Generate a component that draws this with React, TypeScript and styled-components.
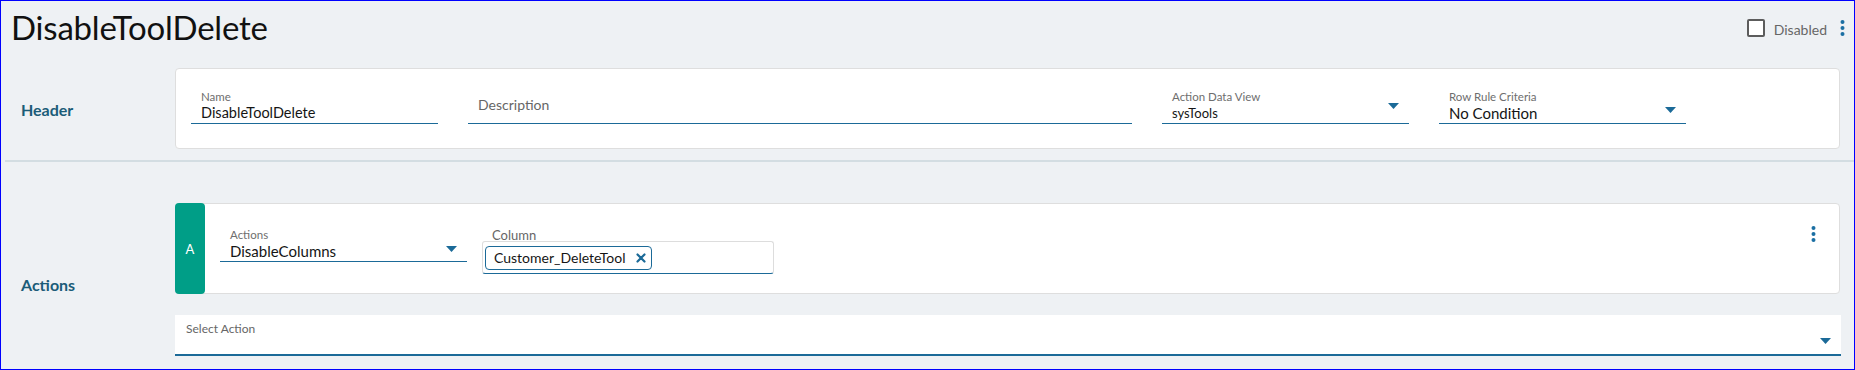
import React from 'react';
import styled, { createGlobalStyle } from 'styled-components';

const GlobalStyle = createGlobalStyle`
  html, body {
    margin: 0;
    padding: 0;
  }
  body {
    font-family: Lato, "Liberation Sans", sans-serif;
    color: #1c1c1c;
  }
`;

const Page = styled.div`
  box-sizing: border-box;
  width: 1855px;
  height: 370px;
  border: 1px solid #0000ff;
  background: #eef1f4;
  overflow: hidden;
`;

const TitleBar = styled.div`
  height: 54px;
  display: flex;
  align-items: center;
  justify-content: space-between;
  padding: 0 9px 0 10px;
`;

const Title = styled.h1`
  margin: 0 0 2px;
  font-size: 33px;
  font-weight: 400;
  color: #111;
  letter-spacing: -0.2px;
`;

const TitleTools = styled.div`
  display: flex;
  align-items: center;
  gap: 9px;
`;

const CheckBox = styled.span`
  box-sizing: border-box;
  width: 18px;
  height: 18px;
  border: 2px solid #5c5c5c;
  border-radius: 2px;
  background: #fff;
`;

const CheckLabel = styled.span`
  font-size: 14px;
  color: #666;
  margin-top: 3px;
  margin-right: 4px;
`;

const Section = styled.div<{ $top: number; $bottom: number; $divider?: boolean }>`
  display: flex;
  align-items: center;
  margin-left: 4px;
  padding: ${p => p.$top}px 14px ${p => p.$bottom}px 0;
  border-bottom: ${p => (p.$divider ? '2px solid #d3dde2' : 'none')};
`;

const SectionLabel = styled.div<{ $shift: number }>`
  width: 154px;
  flex: none;
  padding-left: 16px;
  padding-top: ${p => p.$shift}px;
  font-size: 16px;
  font-weight: 700;
  color: #1b5c78;
`;

const SectionBody = styled.div`
  flex: 1;
  display: flex;
  flex-direction: column;
  gap: 21px;
`;

const Card = styled.div`
  box-sizing: border-box;
  background: #fff;
  border: 1px solid #dedede;
  border-radius: 4px;
  display: flex;
  position: relative;
`;

const HeaderFields = styled.div`
  flex: 1;
  display: flex;
  align-items: flex-end;
  gap: 30px;
  padding: 21px 153px 24px 15px;
`;

const Field = styled.div<{ $width?: number }>`
  box-sizing: border-box;
  position: relative;
  width: ${p => (p.$width ? `${p.$width}px` : 'auto')};
  flex: ${p => (p.$width ? 'none' : '1')};
  border-bottom: 1px solid #1b6a98;
  padding: 0 30px 1px 10px;
  display: flex;
  flex-direction: column;
`;

const FieldLabel = styled.span`
  font-size: 11.5px;
  line-height: 14px;
  color: #6e6e6e;
`;

const FieldValue = styled.span<{ $size?: number }>`
  font-size: ${p => p.$size ?? 14.5}px;
  line-height: 18px;
  color: #151515;
  white-space: nowrap;
`;

const Placeholder = styled.span`
  font-size: 14px;
  line-height: 18px;
  color: #666;
  padding-bottom: 8px;
`;

const Caret = styled.svg<{ $y: number }>`
  position: absolute;
  right: 10px;
  top: ${p => p.$y}px;
`;

const Badge = styled.div`
  width: 30px;
  flex: none;
  margin: -1px 0 -1px -1px;
  background: #009e87;
  border-radius: 4px;
  color: #fff;
  font-size: 13px;
  display: flex;
  align-items: center;
  justify-content: center;
`;

const ActionFields = styled.div`
  display: flex;
  align-items: flex-start;
  gap: 15px;
  padding: 24px 0 19px 15px;
`;

const TagField = styled.div`
  display: flex;
  flex-direction: column;
  width: 292px;
`;

const TagFieldLabel = styled.span`
  font-size: 13px;
  line-height: 14px;
  color: #666;
  padding-left: 10px;
`;

const TagBox = styled.div`
  box-sizing: border-box;
  height: 33px;
  margin-top: -1px;
  border: 1px solid #dddddd;
  border-bottom-color: #1b6a98;
  border-radius: 3px;
  padding: 4px 2px;
  display: flex;
  align-items: center;
`;

const Chip = styled.span`
  box-sizing: border-box;
  height: 24px;
  border: 1px solid #1b6a98;
  border-radius: 4px;
  display: inline-flex;
  align-items: center;
  gap: 10px;
  padding: 0 5px 0 8px;
  font-size: 14px;
  color: #151515;
`;

const Kebab = styled.svg<{ $top?: number; $right?: number }>`
  display: block;
  ${p => (p.$top !== undefined ? `position: absolute; top: ${p.$top}px; right: ${p.$right}px;` : '')}
`;

const SelectBar = styled.div`
  box-sizing: border-box;
  position: relative;
  height: 41px;
  margin-right: -1px;
  background: #fff;
  border-bottom: 2px solid #1b6a98;
  padding: 6px 11px;
  font-size: 12px;
  color: #666;
`;

function DownCaret({ y }: { y: number }) {
  return (
    <Caret $y={y} width="11" height="6" viewBox="0 0 11 6">
      <path d="M0 0 L11 0 L5.5 6 Z" fill="#1b6a98" />
    </Caret>
  );
}

function Dots({ top, right }: { top?: number; right?: number }) {
  return (
    <Kebab $top={top} $right={right} width="5" height="16" viewBox="0 0 5 16">
      <circle cx="2.5" cy="2" r="2" fill="#1b6fa3" />
      <circle cx="2.5" cy="8" r="2" fill="#1b6fa3" />
      <circle cx="2.5" cy="14" r="2" fill="#1b6fa3" />
    </Kebab>
  );
}

export default function App() {
  return (
    <Page>
      <GlobalStyle />
      <TitleBar>
        <Title>DisableToolDelete</Title>
        <TitleTools>
          <CheckBox />
          <CheckLabel>Disabled</CheckLabel>
          <Dots />
        </TitleTools>
      </TitleBar>

      <Section $top={13} $bottom={11} $divider>
        <SectionLabel $shift={1}>Header</SectionLabel>
        <SectionBody>
          <Card>
            <HeaderFields>
              <Field $width={247}>
                <FieldLabel>Name</FieldLabel>
                <FieldValue>DisableToolDelete</FieldValue>
              </Field>
              <Field>
                <Placeholder>Description</Placeholder>
              </Field>
              <Field $width={247}>
                <FieldLabel>Action Data View</FieldLabel>
                <FieldValue $size={13}>sysTools</FieldValue>
                <DownCaret y={13} />
              </Field>
              <Field $width={247}>
                <FieldLabel>Row Rule Criteria</FieldLabel>
                <FieldValue $size={15}>No Condition</FieldValue>
                <DownCaret y={17} />
              </Field>
            </HeaderFields>
          </Card>
        </SectionBody>
      </Section>

      <Section $top={41} $bottom={13}>
        <SectionLabel $shift={10}>Actions</SectionLabel>
        <SectionBody>
          <Card>
            <Badge>A</Badge>
            <ActionFields>
              <Field $width={247}>
                <FieldLabel>Actions</FieldLabel>
                <FieldValue $size={15}>DisableColumns</FieldValue>
                <DownCaret y={18} />
              </Field>
              <TagField>
                <TagFieldLabel>Column</TagFieldLabel>
                <TagBox>
                  <Chip>
                    Customer_DeleteTool
                    <svg width="10" height="10" viewBox="0 0 10 10">
                      <path d="M1.5 1.5 L8.5 8.5 M8.5 1.5 L1.5 8.5" stroke="#1b6a98" strokeWidth="2.2" strokeLinecap="round" />
                    </svg>
                  </Chip>
                </TagBox>
              </TagField>
            </ActionFields>
            <Dots top={22} right={23} />
          </Card>
          <SelectBar>
            Select Action
            <DownCaret y={23} />
          </SelectBar>
        </SectionBody>
      </Section>
    </Page>
  );
}
